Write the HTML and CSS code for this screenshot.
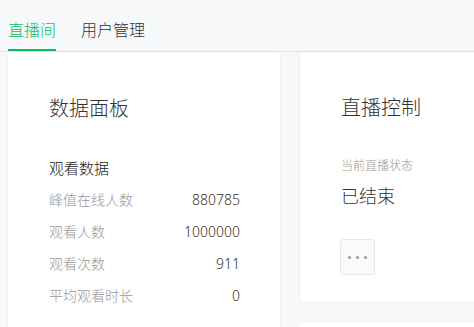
FILE: index.html
```html
<!DOCTYPE html>
<html>
<head>
    <meta charset="UTF-8">
    <title>直播间</title>
    <link rel="stylesheet" href="styles.css">
</head>
<body>
    <div class="tabs">
        <a class="tab active">直播间</a>
        <a class="tab">用户管理</a>
    </div>

    <div class="main">
        <div class="card card-data">
            <h2 class="card-title">数据面板</h2>
            <h3 class="section-title">观看数据</h3>
            <div class="row"><span class="label">峰值在线人数</span><span class="value">880785</span></div>
            <div class="row"><span class="label">观看人数</span><span class="value">1000000</span></div>
            <div class="row"><span class="label">观看次数</span><span class="value">911</span></div>
            <div class="row"><span class="label">平均观看时长</span><span class="value">0</span></div>
        </div>

        <div class="side">
            <div class="card card-control">
                <h2 class="card-title">直播控制</h2>
                <p class="status-label">当前直播状态</p>
                <p class="status">已结束</p>
                <button class="more" type="button"><i></i><i></i><i></i></button>
            </div>
            <div class="card card-next"></div>
        </div>
    </div>
</body>
</html>
```

FILE: styles.css
```css
body {
    margin: 0;
    background-color: #f7f8fa;
    font-family: "Noto Sans", "Noto Sans CJK SC", sans-serif;
    font-weight: 300;
    color: #333;
    overflow: hidden;
}
.tabs {
    display: flex;
    gap: 25px;
    padding: 0 8px;
    border-bottom: 1px solid #e5e6e8;
}
.tab {
    padding: 18px 0 7px;
    font-size: 16px;
    line-height: 24px;
    color: #333;
    border-bottom: 2px solid transparent;
}
.tab.active {
    color: #07c160;
    border-bottom-color: #07c160;
}
.main {
    display: flex;
    align-items: flex-start;
    gap: 20px;
    padding: 0 8px;
}
.card {
    background-color: #fff;
    border-radius: 4px;
    box-shadow: 0 0 3px rgba(0, 0, 0, 0.06);
    box-sizing: border-box;
}
.card-data {
    flex: none;
    width: 272px;
    height: 300px;
    padding: 43px 40px 0 41px;
}
.card-title {
    margin: 0;
    font-size: 20px;
    font-weight: 300;
    line-height: 28px;
    color: #333;
}
.section-title {
    margin: 34px 0 5px;
    font-size: 15px;
    font-weight: 300;
    line-height: 22px;
    color: #222;
}
.row {
    display: flex;
    justify-content: space-between;
    font-size: 14px;
    line-height: 32px;
}
.label {
    color: #999;
}
.value {
    color: #333;
}
.side {
    flex: none;
    display: flex;
    flex-direction: column;
    gap: 20px;
    width: 320px;
}
.card-control {
    padding: 42px 40px 27px 41px;
}
.status-label {
    margin: 35px 0 0;
    font-size: 12px;
    line-height: 18px;
    color: #999;
}
.status {
    margin: 8px 0 0;
    font-size: 18px;
    line-height: 26px;
    color: #333;
}
.more {
    display: flex;
    align-items: center;
    justify-content: center;
    gap: 5px;
    width: 35px;
    height: 36px;
    margin: 30px 0 0 -1px;
    padding: 0;
    background-color: #fafafa;
    border: 1px solid #e8e8e8;
    border-radius: 3px;
}
.more i {
    width: 3px;
    height: 3px;
    border-radius: 50%;
    background-color: #999;
}
.card-next {
    height: 60px;
}
```
